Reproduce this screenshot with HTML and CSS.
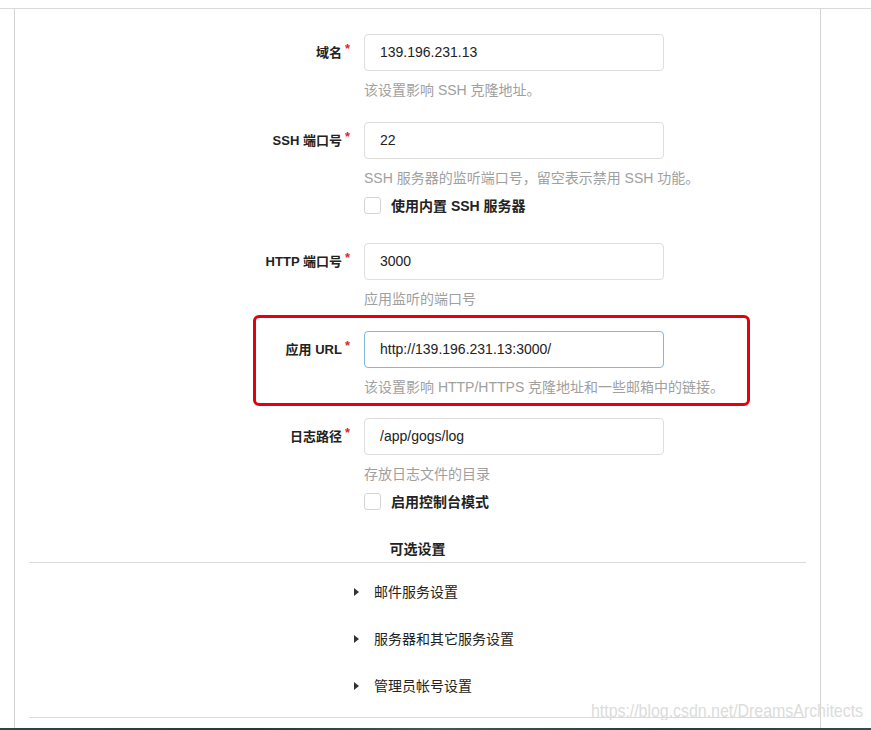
FILE: index.html
```html
<!DOCTYPE html>
<html lang="zh-CN">
<head>
<meta charset="utf-8">
<title>Gogs 安装</title>
<link rel="stylesheet" href="styles.css">
</head>
<body>
<div class="frame">
  <div class="panel">
    <div class="field">
      <label class="field-label required">域名</label>
      <div class="field-body">
        <div class="input">139.196.231.13</div>
        <div class="help">该设置影响 SSH 克隆地址。</div>
      </div>
    </div>
    <div class="field">
      <label class="field-label required">SSH 端口号</label>
      <div class="field-body">
        <div class="input">22</div>
        <div class="help">SSH 服务器的监听端口号，留空表示禁用 SSH 功能。</div>
        <div class="check"><span class="box"></span><span class="check-text">使用内置 SSH 服务器</span></div>
      </div>
    </div>
    <div class="field">
      <label class="field-label required">HTTP 端口号</label>
      <div class="field-body">
        <div class="input">3000</div>
        <div class="help">应用监听的端口号</div>
      </div>
    </div>
    <div class="field field-tight">
      <label class="field-label required">应用 URL</label>
      <div class="field-body">
        <div class="input focus">http://139.196.231.13:3000/</div>
        <div class="help">该设置影响 HTTP/HTTPS 克隆地址和一些邮箱中的链接。</div>
      </div>
    </div>
    <div class="field">
      <label class="field-label required">日志路径</label>
      <div class="field-body">
        <div class="input">/app/gogs/log</div>
        <div class="help">存放日志文件的目录</div>
        <div class="check"><span class="box"></span><span class="check-text">启用控制台模式</span></div>
      </div>
    </div>

    <h4 class="section-title">可选设置</h4>
    <div class="divider"></div>
    <div class="details">
      <div class="summary"><span class="caret"></span>邮件服务设置</div>
      <div class="summary"><span class="caret"></span>服务器和其它服务设置</div>
      <div class="summary"><span class="caret"></span>管理员帐号设置</div>
    </div>
    <div class="divider"></div>

    <div class="annotation"></div>
  </div>
  <div class="watermark">https://blog.csdn.net/DreamsArchitects</div>
</div>
<div class="footer-strip"></div>
</body>
</html>
```

FILE: styles.css
```css
html, body {
  margin: 0;
  padding: 0;
  background: #ffffff;
  font-family: "Liberation Sans", "Noto Sans CJK SC", sans-serif;
  color: #333333;
  overflow: hidden;
}

.frame {
  position: relative;
  margin-top: 8px;
  border-top: 1px solid #d9d9d9;
  height: 719px;
}

.panel {
  position: relative;
  box-sizing: border-box;
  margin-left: 14px;
  width: 807px;
  height: 719px;
  border-left: 1px solid #d4d4d4;
  border-right: 1px solid #d4d4d4;
  padding: 25px 14px 0 14px;
}

.field {
  display: grid;
  grid-template-columns: 321px 300px;
  column-gap: 14px;
  margin-bottom: 23px;
}

.field-tight {
  margin-bottom: 22px;
}

.field-label {
  text-align: right;
  font-size: 13px;
  font-weight: bold;
  line-height: 37px;
  color: #222222;
}

.required::after {
  content: "*";
  color: #db2828;
  margin-left: 3px;
  position: relative;
  top: -4px;
}

.input {
  box-sizing: border-box;
  height: 37px;
  border: 1px solid #dedede;
  border-radius: 4px;
  padding: 0 15px;
  font-size: 14px;
  line-height: 35px;
  color: #222222;
}

.input.focus {
  border-color: #85b7d9;
}

.help {
  margin-top: 10px;
  font-size: 14px;
  line-height: 18px;
  color: #a0a0a0;
  white-space: nowrap;
}

.check {
  margin-top: 8px;
  margin-bottom: 5px;
  height: 20px;
  display: flex;
  align-items: center;
  gap: 10px;
}

.box {
  box-sizing: border-box;
  width: 17px;
  height: 17px;
  border: 1px solid #d4d4d5;
  border-radius: 3px;
  background: #fff;
}

.check-text {
  font-size: 14px;
  font-weight: bold;
  color: #222222;
}

.section-title {
  margin: 3px 0 3px 0;
  text-align: center;
  font-size: 14px;
  line-height: 20px;
  font-weight: bold;
  color: #222222;
}

.divider {
  height: 0;
  border-top: 1px solid #dadada;
}

.details {
  display: flex;
  flex-direction: column;
  gap: 27px;
  padding: 19px 0 21px 325px;
}

.summary {
  display: flex;
  align-items: center;
  font-size: 14px;
  line-height: 20px;
  color: #222222;
}

.caret {
  width: 0;
  height: 0;
  border-left: 5px solid #333;
  border-top: 4px solid transparent;
  border-bottom: 4px solid transparent;
  margin-right: 15px;
}

.annotation {
  position: absolute;
  left: 238px;
  top: 306px;
  width: 497px;
  height: 91px;
  box-sizing: border-box;
  border: 3px solid #e6000e;
  border-radius: 6px;
  pointer-events: none;
}

.watermark {
  position: absolute;
  left: 591px;
  top: 692px;
  font-size: 16px;
  line-height: 20px;
  color: #dcdcdc;
  white-space: nowrap;
  letter-spacing: -0.05px;
  transform: scaleY(1.12);
}

.footer-strip {
  height: 3px;
  background: linear-gradient(90deg, #254b40, #1c3f36 30%, #3b5d52 50%, #1d4339 75%, #2c5247);
}
```
